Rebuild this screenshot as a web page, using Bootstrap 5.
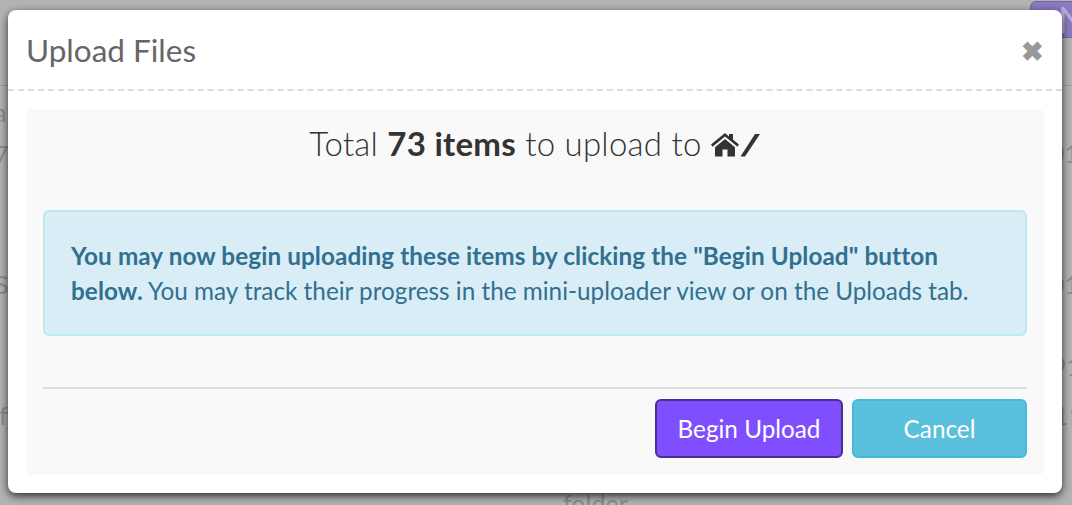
<!DOCTYPE html>
<html lang="en">
<head>
<meta charset="utf-8">
<title>Upload Files</title>
<link rel="stylesheet" href="https://cdn.jsdelivr.net/npm/bootstrap@5.3.0/dist/css/bootstrap.min.css">
<style>
html,body{height:100%;}
body{background:#b3b3b3;font-family:"Lato",sans-serif;overflow:hidden;position:relative;color:#333;}
.bg-frag{position:absolute;color:#8c8c8c;font-size:25px;line-height:1;white-space:nowrap;}
.bg-line{position:absolute;height:1px;background:#999;}
.bg-btn{position:absolute;left:1030px;top:1px;width:60px;height:37px;background:#8a7abf;border:1px solid #7464a8;border-radius:6px;overflow:hidden;color:#b9aedb;font-size:36px;line-height:35px;padding-left:27px;}
.up-dialog{position:absolute;left:8px;top:10px;width:1054px;height:483px;background:#fff;border:0;border-radius:8px;box-shadow:0 3px 9px rgba(0,0,0,.75);}
.up-head{height:81px;padding:2px 18px 0;border-bottom:2px dashed #dcdcdc;}
.up-title{font-size:31.500px;font-weight:400;color:#666;margin:0;line-height:1;}
.up-close{font-size:27px;font-weight:700;color:#999;line-height:1;background:none;border:0;padding:0;display:flex;}
.up-panel{margin:18px 18px 0;height:366px;background:#f9f9f9;border-radius:5px;padding:17px;}
.up-total{font-family:"Lato",sans-serif;font-size:33px;letter-spacing:.25px;font-weight:300;color:#333;line-height:34px;margin:0 0 50px;text-align:center;}
.up-total b{font-weight:700;}
.up-total svg{vertical-align:-1px;}
.up-alert{height:126px;margin:0;padding:26px 26px;background:#d9edf7;border:2px solid #bce8f1;border-radius:6px;color:#31708f;font-size:24.300px;line-height:35px;}
.up-alert strong{letter-spacing:.08px;}
.up-rule{margin:51px 0 10px;border:0;border-top:2px solid #ddd;opacity:1;}
.up-btn{height:59px;font-size:24.300px;line-height:1;border-radius:6px;color:#fff;padding:2px 0 0;}
.up-begin{width:188px;margin-right:9px;background:#7f4fff;border:2px solid #4b2f8f;}
.up-cancel{width:175px;background:#5bc0de;border:2px solid #46b8da;}
.up-begin:hover{background:#7f4fff;color:#fff;border-color:#4b2f8f;}
.up-cancel:hover{background:#5bc0de;color:#fff;border-color:#46b8da;}
</style>
</head>
<body>
<div class="bg-btn">N</div>
<div class="bg-line" style="left:0;top:85px;width:8px"></div>
<div class="bg-line" style="left:1062px;top:85px;width:10px"></div>
<span class="bg-frag" style="left:-12px;top:100px">ia</span>
<span class="bg-frag" style="left:-6px;top:142px">7</span>
<span class="bg-frag" style="left:-5px;top:272px">S</span>
<span class="bg-frag" style="left:-1px;top:403px">f</span>
<span class="bg-frag" style="left:1050px;top:141px">01</span>
<span class="bg-frag" style="left:1050px;top:272px">01</span>
<span class="bg-frag" style="left:1052px;top:354px">91</span>
<span class="bg-frag" style="left:1054px;top:403px">11</span>
<span class="bg-frag" style="left:563px;top:491px">folder</span>

<div class="modal-content up-dialog">
  <div class="up-head d-flex align-items-center justify-content-between">
    <h4 class="up-title">Upload Files</h4>
    <button type="button" class="up-close" aria-label="Close">&#10006;</button>
  </div>
  <div class="up-panel">
    <h3 class="up-total">Total <b>73 items</b> to upload to <svg width="28" height="24" viewBox="0 0 28 24" fill="#333" aria-hidden="true"><path d="M14 0 0 11.500l1.500 2.300L14 3.500l12.500 10.300 1.500-2.300L22 6.600V1h-4v2.400z"/><path d="M14 6 4 14.200V23.500h7.500v-7h5v7H24v-9.300z"/></svg><svg width="22" height="24" viewBox="0 0 22 24" fill="#333" aria-hidden="true"><path d="M16 1h5L6 23.500H1.500z"/></svg></h3>
    <div class="alert up-alert" role="alert"><strong>You may now begin uploading these items by clicking the "Begin Upload" button below.</strong> You may track their progress in the mini-uploader view or on the Uploads tab.</div>
    <hr class="up-rule">
    <div class="d-flex justify-content-end">
      <button type="button" class="btn up-btn up-begin">Begin Upload</button>
      <button type="button" class="btn up-btn up-cancel">Cancel</button>
    </div>
  </div>
</div>
<script src="https://cdn.jsdelivr.net/npm/bootstrap@5.3.0/dist/js/bootstrap.bundle.min.js"></script>
</body>
</html>
